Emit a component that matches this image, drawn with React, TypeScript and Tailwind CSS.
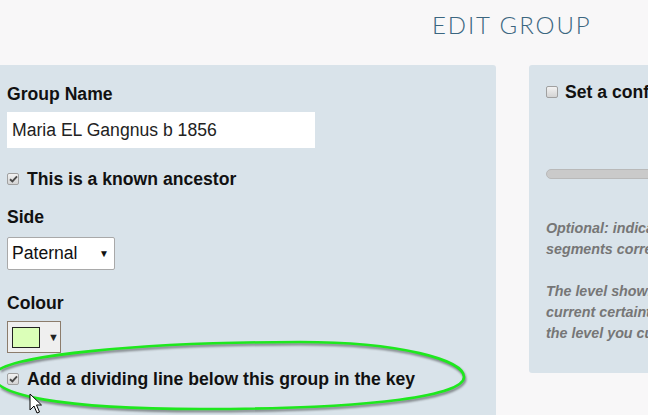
import React from "react";

function Tick({ checked }: { checked?: boolean }) {
  return (
    <span className="w-[12px] h-[12px] shrink-0 rounded-[2px] border border-[#a0a0a0] bg-gradient-to-b from-[#f2f2f2] to-[#d4d4d4] flex items-center justify-center">
      {checked && (
        <svg width="9" height="8" viewBox="0 0 9 8">
          <path d="M1 4.2 L3.4 6.5 L8 1.3" fill="none" stroke="#4a4a4a" strokeWidth="1.9" />
        </svg>
      )}
    </span>
  );
}

const label = "text-[17.6px] font-bold leading-[20px] text-[#111] whitespace-nowrap";

export default function App() {
  return (
    <div className="relative w-[648px] h-[415px] overflow-hidden bg-[#f8f7f8] font-['Liberation_Sans',Arial,sans-serif]">
      {/* Title */}
      <h1 className="pt-[13px] pl-[432px] text-[24px] leading-[24px] font-light tracking-[1.9px] text-[#3b6680] font-['Lato',sans-serif] whitespace-nowrap">
        EDIT GROUP
      </h1>

      <div className="mt-[28px] flex items-start gap-[33px]">
        {/* Left panel */}
        <div className="w-[496px] shrink-0 h-[360px] bg-[#d9e3ea] rounded-tr-[3px] pt-[19px] pl-[7px]">
          <div className={label}>Group Name</div>
          <div className="mt-[8px] w-[308px] h-[36px] bg-white pl-[5px] flex items-center text-[17.6px] text-[#222]">
            Maria EL Gangnus b 1856
          </div>

          <div className="mt-[21px] flex items-center gap-[8px]">
            <Tick checked />
            <span className={label}>This is a known ancestor</span>
          </div>

          <div className={`${label} mt-[18px]`}>Side</div>
          <div className="mt-[10px] w-[108px] h-[33px] bg-white border border-[#a9a9a9] rounded-[2px] pl-[4px] pr-[5px] flex items-center justify-between text-[17.6px] text-[#111]">
            <span>Paternal</span>
            <span className="text-[10px] leading-none">▼</span>
          </div>

          <div className={`${label} mt-[23px]`}>Colour</div>
          <div className="mt-[8px] w-[54px] h-[32px] bg-[#efefef] border border-[#8c7c6c] pl-[4px] flex items-center gap-[8px]">
            <span className="w-[28px] h-[21px] bg-[#dbffb8] border border-[#222]" />
            <span className="text-[11px] leading-none text-[#222]">▼</span>
          </div>

          <div className="mt-[16px] flex items-center gap-[8px]">
            <Tick checked />
            <span className={label}>Add a dividing line below this group in the key</span>
          </div>
        </div>

        {/* Right panel */}
        <div className="w-[400px] shrink-0 bg-[#d9e3ea] rounded-l-[3px] pt-[17px] pl-[17px] pb-[29px]">
          <div className="flex items-center gap-[7px]">
            <Tick />
            <span className={label}>Set a confidence level</span>
          </div>
          <div className="mt-[67px] h-[10px] rounded-full bg-[#cacaca] border border-[#b9b9b9]" />
          <div className="mt-[39px] text-[14.3px] leading-[21px] italic font-bold text-[#767676] whitespace-nowrap">
            <p>
              Optional: indicate how confident you are that these
              <br />
              segments correctly belong to this ancestor.
            </p>
            <p className="mt-[21px]">
              The level shown on the slider indicates your
              <br />
              current certainty. Drag the slider to set
              <br />
              the level you currently have.
            </p>
          </div>
        </div>
      </div>

      {/* Annotation ellipse */}
      <svg
        className="absolute left-0 top-0 pointer-events-none drop-shadow-[1.5px_2px_1px_rgba(0,0,0,0.45)]"
        width="648"
        height="415"
        viewBox="0 0 648 415"
      >
        <path
          d="M -6 376 C -6 355, 150 342, 300 342 C 400 342, 464 360, 464 377 C 464 395, 380 409, 200 409 C 60 409, -6 395, -6 376 Z"
          fill="none"
          stroke="#1ee81e"
          strokeWidth="2.6"
        />
      </svg>

      {/* Mouse cursor */}
      <svg className="absolute left-[29px] top-[393px] pointer-events-none" width="14" height="22" viewBox="0 0 14 22">
        <path d="M1 1 L1 17 L5 13 L8 20 L10.5 19 L7.5 12 L12.5 12 Z" fill="#fff" stroke="#000" strokeWidth="1" strokeLinejoin="round" />
      </svg>
    </div>
  );
}
